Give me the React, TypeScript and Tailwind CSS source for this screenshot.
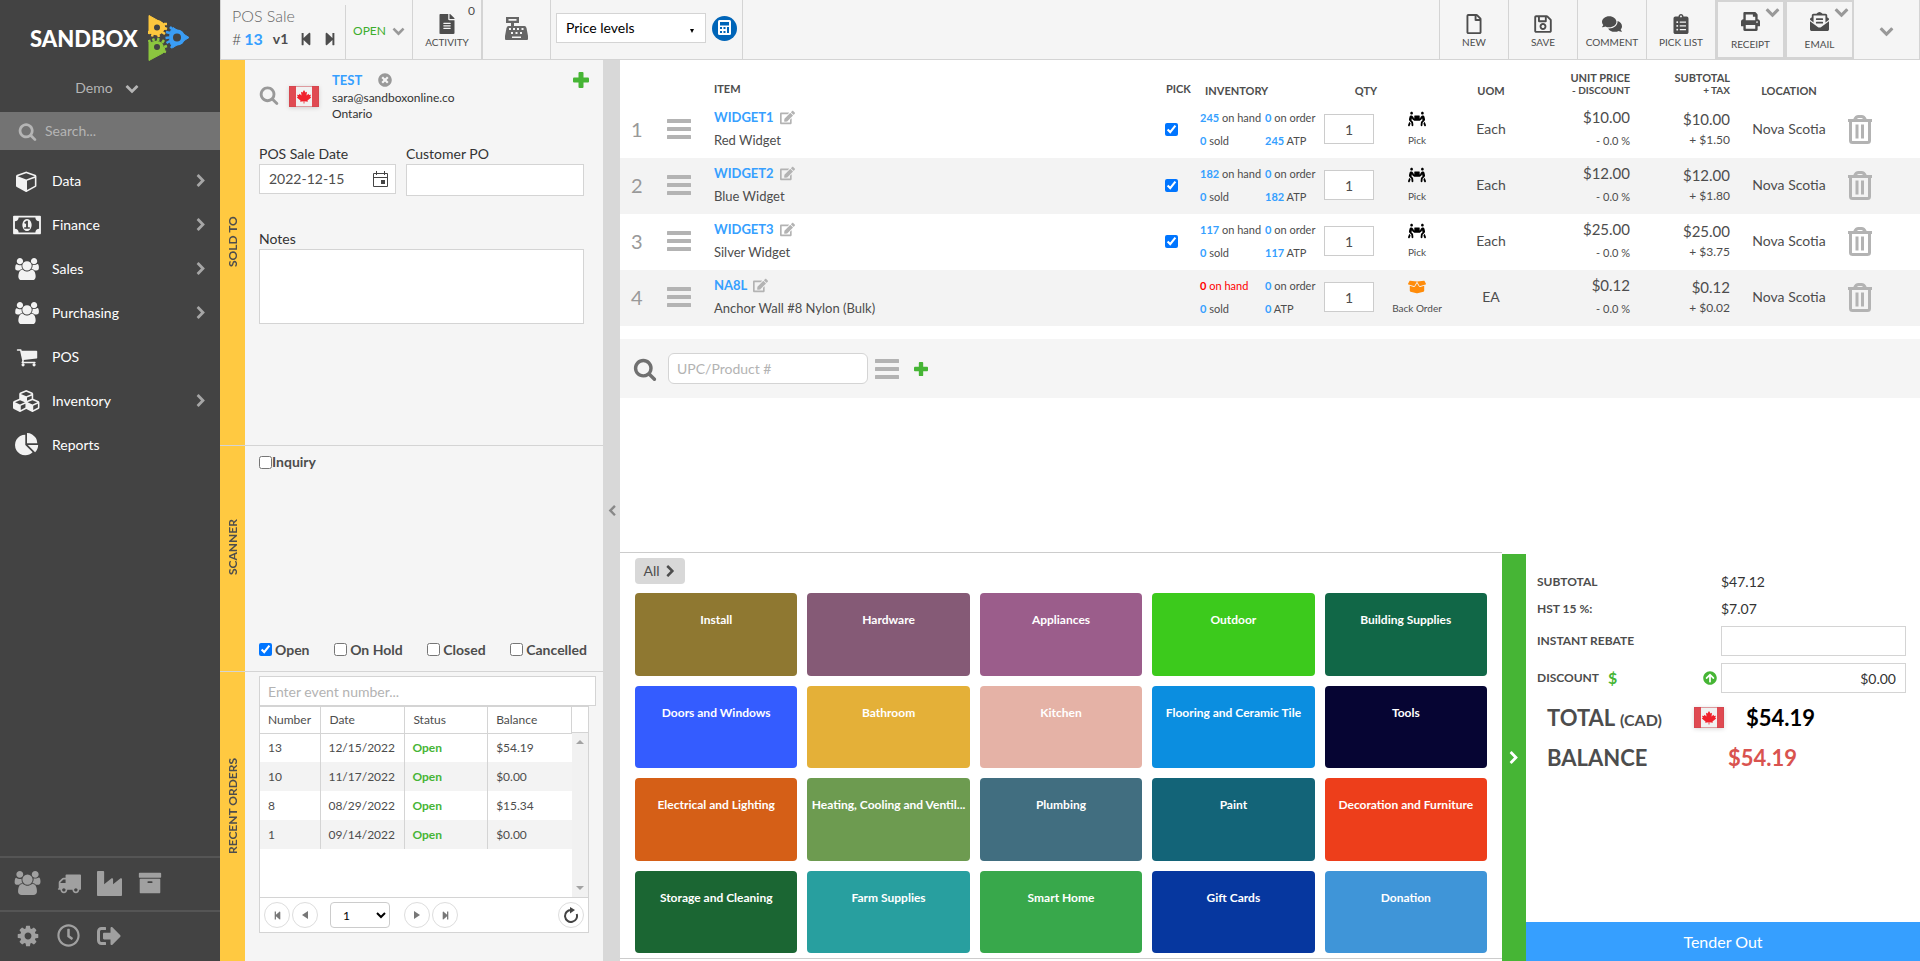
import type { ReactNode } from "react";
import {
  FaArrowCircleUp,
  FaBoxOpen,
  FaClipboardList,
  FaComments,
  FaEdit,
  FaEnvelopeOpenText,
  FaFileAlt,
  FaPeopleCarry,
  FaPrint,
  FaRegClock,
  FaRegFile,
  FaRegSave,
  FaSignOutAlt,
  FaStepBackward,
  FaStepForward,
  FaTimesCircle,
} from "react-icons/fa";

const glyphs = {
  down: {
    w: 1792,
    d: "M1683 808l-742 741q-19 19-45 19t-45-19l-742-741q-19-19-19-45.5t19-45.5l166-165q19-19 45-19t45 19l531 531 531-531q19-19 45-19t45 19l166 165q19 19 19 45.5t-19 45.5z",
  },
  right: {
    w: 1792,
    d: "M1363 877l-742 742q-19 19-45 19t-45-19l-166-166q-19-19-19-45t19-45l531-531-531-531q-19-19-19-45t19-45l166-166q19-19 45-19t45 19l742 742q19 19 19 45t-19 45z",
  },
  left: {
    w: 1792,
    d: "M1427 301l-531 531 531 531q19 19 19 45t-19 45l-166 166q-19 19-45 19t-45-19l-742-742q-19-19-19-45t19-45l742-742q19-19 45-19t45 19l166 166q19 19 19 45t-19 45z",
  },
  users: {
    w: 1920,
    d: "M593 896q-162 5-265 128h-134q-82 0-138-40.5t-56-118.5q0-353 124-353 6 0 43.5 21t97.5 42.5 119 21.5q67 0 133-23-5 37-5 66 0 159 93 287zm1071 637q0 120-73 189.5t-194 69.5h-874q-121 0-194-69.5t-73-189.5q0-53 3.5-103.5t14-109 26.5-108.5 43-97.5 62-81 85.5-53.5 111.5-20q10 0 43 21.5t73 48 107 48 135 21.5 135-21.5 107-48 73-48 43-21.5q61 0 111.5 20t85.5 53.5 62 81 43 97.5 26.5 108.5 14 109 3.5 103.5zm-1024-1277q0 106-75 181t-181 75-181-75-75-181 75-181 181-75 181 75 75 181zm704 384q0 159-112.5 271.5t-271.5 112.5-271.5-112.5-112.5-271.5 112.5-271.5 271.5-112.5 271.5 112.5 112.5 271.5zm576 225q0 78-56 118.5t-138 40.5h-134q-103-123-265-128 93-128 93-287 0-29-5-66 66 23 133 23 59 0 119-21.5t97.5-42.5 43.5-21q124 0 124 353zm-128-609q0 106-75 181t-181 75-181-75-75-181 75-181 181-75 181 75 75 181z",
  },
  search: {
    w: 1792,
    d: "M1216 832q0-185-131.5-316.5t-316.5-131.5-316.5 131.5-131.5 316.5 131.5 316.5 316.5 131.5 316.5-131.5 131.5-316.5zm512 832q0 52-38 90t-90 38q-54 0-90-38l-343-342q-179 124-399 124-143 0-273.5-55.5t-225-150-150-225-55.5-273.5 55.5-273.5 150-225 225-150 273.5-55.5 273.5 55.5 225 150 150 225 55.5 273.5q0 220-124 399l343 343q37 37 37 90z",
  },
  cube: {
    w: 1792,
    d: "M896 1629l640-349v-636l-640 233v752zm-64-865l698-254-698-254-698 254zm832-252v768q0 35-18 65t-49 47l-704 384q-28 16-61 16t-61-16l-704-384q-31-17-49-47t-18-65v-768q0-40 23-73t61-47l704-256q22-8 44-8t44 8l704 256q38 14 61 47t23 73z",
  },
  cubes: {
    w: 2304,
    d: "M640 1632l384-192v-314l-384 164v342zm-64-454l404-173-404-173-404 173zm1088 454l384-192v-314l-384 164v342zm-64-454l404-173-404-173-404 173zm-448-293l384-165v-266l-384 164v267zm-64-379l441-189-441-189-441 189zm1088 518v416q0 36-19 67t-52 47l-448 224q-25 14-57 14t-57-14l-448-224q-4-2-7-4-2 2-7 4l-448 224q-25 14-57 14t-57-14l-448-224q-33-16-52-47t-19-67v-416q0-38 21.5-70t56.5-48l434-186v-400q0-38 21.5-70t56.5-48l448-192q23-10 50-10t50 10l448 192q35 16 56.5 48t21.5 70v400l434 186q36 16 57 48t21 70z",
  },
  money: {
    w: 1920,
    d: "M768 1152h384v-96h-128v-448h-114l-148 137 77 80q42-37 55-57h2v288h-128v96zm512-256q0 70-21 142t-59.5 134-101.5 101-138 39-138-39-101.5-101-59.5-134-21-142 21-142 59.5-134 101.5-101 138-39 138 39 101.5 101 59.5 134 21 142zm512 256v-512q-106 0-181-75t-75-181h-1152q0 106-75 181t-181 75v512q106 0 181 75t75 181h1152q0-106 75-181t181-75zm128-832v1152q0 26-19 45t-45 19h-1792q-26 0-45-19t-19-45v-1152q0-26 19-45t45-19h1792q26 0 45 19t19 45z",
  },
  cart: {
    w: 1792,
    d: "M704 1536q0 52-38 90t-90 38-90-38-38-90 38-90 90-38 90 38 38 90zm896 0q0 52-38 90t-90 38-90-38-38-90 38-90 90-38 90 38 38 90zm128-1088v512q0 24-16.5 42.5t-40.5 21.5l-1044 122q13 60 13 70 0 16-24 64h920q26 0 45 19t19 45-19 45-45 19h-1024q-26 0-45-19t-19-45q0-11 8-31.5t16-36 21.5-40 15.5-29.5l-177-823h-204q-26 0-45-19t-19-45 19-45 45-19h256q16 0 28.5 6.5t19.5 15.5 13 24.5 8 26 5.5 29.5 4.5 26h1201q26 0 45 19t19 45z",
  },
  pie: {
    w: 1792,
    d: "M768 890l546 546q-106 108-247.5 168t-298.5 60q-209 0-385.5-103t-279.5-279.5-103-385.5 103-385.5 279.5-279.5 385.5-103v762zm187 6h773q0 157-60 298.5t-168 247.5zm709-128h-768v-768q209 0 385.5 103t279.5 279.5 103 385.5z",
  },
  truck: {
    w: 1792,
    d: "M640 1408q0-52-38-90t-90-38-90 38-38 90 38 90 90 38 90-38 38-90zm-384-512h384v-256h-158q-13 0-22 9l-195 195q-9 9-9 22v30zm1280 512q0-52-38-90t-90-38-90 38-38 90 38 90 90 38 90-38 38-90zm256-1088v1024q0 15-4 26.5t-13.5 18.5-16.5 11.5-23.5 6-22.5 2-25.5 0-22.5-.5q0 106-75 181t-181 75-181-75-75-181h-384q0 106-75 181t-181 75-181-75-75-181h-64q-3 0-22.5.5t-25.5 0-22.5-2-23.5-6-16.5-11.5-13.5-18.5-4-26.5q0-26 19-45t45-19v-320q0-8-.5-35t0-38 2.5-34.5 6.5-37 14-30.5 22.5-30l198-198q19-19 50.5-32t58.5-13h160v-192q0-26 19-45t45-19h1024q26 0 45 19t19 45z",
  },
  industry: {
    w: 1792,
    d: "M448 0q26 0 45 19t19 45v891l536-429q17-14 40-14 26 0 45 19t19 45v379l536-429q17-14 40-14 26 0 45 19t19 45v1152q0 26-19 45t-45 19h-1664q-26 0-45-19t-19-45v-1664q0-26 19-45t45-19h384z",
  },
  archive: {
    w: 1792,
    d: "M1088 832q0-26-19-45t-45-19h-256q-26 0-45 19t-19 45 19 45 45 19h256q26 0 45-19t19-45zm576-192v960q0 26-19 45t-45 19h-1408q-26 0-45-19t-19-45v-960q0-26 19-45t45-19h1408q26 0 45 19t19 45zm64-448v256q0 26-19 45t-45 19h-1536q-26 0-45-19t-19-45v-256q0-26 19-45t45-19h1536q26 0 45 19t19 45z",
  },
  cog: {
    w: 1792,
    d: "M1152 896q0-106-75-181t-181-75-181 75-75 181 75 181 181 75 181-75 75-181zm512-109v222q0 12-8 23t-20 13l-185 28q-19 54-39 91 35 50 107 138 10 12 10 25t-9 23q-27 37-99 108t-94 71q-12 0-26-9l-138-108q-44 23-91 38-16 136-29 186-7 28-36 28h-222q-14 0-24.5-8.5t-11.5-21.5l-28-184q-49-16-90-37l-141 107q-10 9-25 9-14 0-25-11-126-114-165-168-7-10-7-23 0-12 8-23 15-21 51-66.5t54-70.5q-27-50-41-99l-183-27q-13-2-21-12.5t-8-23.5v-222q0-12 8-23t19-13l186-28q14-46 39-92-40-57-107-138-10-12-10-24 0-10 9-23 26-36 98.5-107.5t94.5-71.5q13 0 26 10l138 107q44-23 91-38 16-136 29-186 7-28 36-28h222q14 0 24.5 8.5t11.5 21.5l28 184q49 16 90 37l142-107q9-9 24-9 13 0 25 10 129 119 165 170 7 8 7 22 0 12-8 23-15 21-51 66.5t-54 70.5q26 50 41 98l183 28q13 2 21 12.5t8 23.5z",
  },
};

type GlyphName = keyof typeof glyphs;

const Glyph = ({ name, className }: { name: GlyphName; className?: string }) => (
  <svg viewBox={`0 0 ${glyphs[name].w} 1792`} fill="currentColor" className={className} aria-hidden="true">
    <path d={glyphs[name].d} />
  </svg>
);

const Logo = () => (
  <svg viewBox="0 0 42 48" className="h-12 w-[42px]" aria-hidden="true">
    <g fill="#fdc73e" stroke="#fdc73e">
      <path d="M1 1.5L16 10 17 15 9 21 1 19Z" strokeLinejoin="round" />
      <circle cx="9" cy="13.500" r="7.500" stroke="none" />
      <path d="M16 10l3 0M16 14l3 1M14 18l3 2M10 20l1 3M5 19l-1 3.500M1 17l-.5 3" strokeWidth="2.500" />
    </g>
    <g fill="#3a9df5" stroke="#3a9df5">
      <path d="M25 13.500L41 23.500 25 33.500 22 29 22 18Z" strokeLinejoin="round" />
      <circle cx="29" cy="23.500" r="8" stroke="none" />
      <path d="M24 15l-2-2M22 19l-4-1M21 23.500l-3.500.5M22 27l-3.500 2M25 31l-2 3" strokeWidth="2.500" />
    </g>
    <g fill="#8cc63f" stroke="#8cc63f">
      <path d="M1 46.500L15 39 17 35 9 27 1 29Z" strokeLinejoin="round" />
      <circle cx="9" cy="34" r="7" stroke="none" />
      <path d="M2 29l-1-3M6 27l-1-2.500M10 27l.5-3M14 29l2-3M16 33l3-1M15 37l3 1" strokeWidth="2.500" />
    </g>
    <circle cx="9" cy="13.500" r="3" fill="#434343" />
    <circle cx="29" cy="23.500" r="4" fill="#434343" />
    <circle cx="9" cy="33" r="3" fill="#434343" />
  </svg>
);

const Flag = () => (
  <svg viewBox="0 0 30 21" className="h-[21px] w-[30px] shrink-0 drop-shadow-sm" role="img" aria-label="Canada">
    <rect width="30" height="21" fill="#f1f1f1" />
    <rect width="7" height="21" fill="#e04a52" />
    <rect x="23" width="7" height="21" fill="#e04a52" />
    <path d="M15 4l1.500 2.500 1.500-.7-.5 3.700 2-1.700.5 1.200 2-.2-.8 2 1 .7-3.700 3 .3 1.200-3.400-.4v2.200h-.8v-2.200l-3.400.4.3-1.200-3.700-3 1-.7-.8-2 2 .2.5-1.200 2 1.700-.5-3.700 1.500.7z" fill="#f0202b" />
    <rect x=".5" y=".5" width="29" height="20" fill="none" stroke="#c9444c" strokeOpacity=".5" />
  </svg>
);

const Bars = () => (
  <svg viewBox="0 0 24 20" className="h-5 w-6 text-[#b3b3b3]" fill="currentColor" aria-hidden="true">
    <rect width="24" height="4" rx=".5" />
    <rect y="8" width="24" height="4" rx=".5" />
    <rect y="16" width="24" height="4" rx=".5" />
  </svg>
);

const Plus = ({ className }: { className: string }) => (
  <svg viewBox="0 0 16 16" className={className} fill="#46b535" aria-hidden="true">
    <rect x="5.500" width="5" height="16" rx="1" />
    <rect y="5.500" width="16" height="5" rx="1" />
  </svg>
);

const Trash = () => (
  <svg viewBox="0 0 24 29" className="h-[29px] w-6 text-[#b3b3b3]" fill="none" stroke="currentColor" aria-hidden="true">
    <path d="M0 5.500h24" strokeWidth="3" />
    <path d="M6.500 5c1-2.500 2-3.500 4-3.500h3c2 0 3 1 4 3.500" strokeWidth="3" />
    <path d="M2.500 6v19.500q0 2 2 2h15q2 0 2-2V6" strokeWidth="3" />
    <path d="M9 9.500v14M14.500 9.500v14" strokeWidth="3" />
  </svg>
);

const Register = () => (
  <svg viewBox="0 0 23 23" className="h-[23px] w-[23px] text-[#666]" fill="currentColor" aria-hidden="true">
    <path fillRule="evenodd" d="M1 0h13v6H9v3h10.500q1.500 0 2 2L23 19v3q0 1-1 1H1q-1 0-1-1v-3l1.500-8q.5-2 2-2H6V6H1zM3.500 2v1.800h8V2zM4 11v2h2v-2zM8 11v2h2v-2zM12 11v2h2v-2zM16.500 11v2h2v-2zM6 15v2h2v-2zM10.500 15v2h2v-2zM15 15v2h2v-2zM7 19.500v1.500h9v-1.500z" />
  </svg>
);

const CalculatorBadge = () => (
  <svg viewBox="0 0 25 25" className="h-[25px] w-[25px]" aria-hidden="true">
    <circle cx="12.500" cy="12.500" r="12.500" fill="#0065b8" />
    <rect x="6" y="4" width="13" height="15" rx="1.500" fill="#fff" />
    <path fill="#0065b8" d="M8 6h9v3.500H8zM8 11h2v2H8zM11.500 11h2v2h-2zM15 11h2v6h-2zM8 15h2v2H8zM11.500 15h2v2h-2z" />
  </svg>
);

const menu: { label: string; icon: GlyphName; size: string; arrow: boolean }[] = [
  { label: "Data", icon: "cube", size: "w-[22px] h-[22px]", arrow: true },
  { label: "Finance", icon: "money", size: "w-7 h-[26px]", arrow: true },
  { label: "Sales", icon: "users", size: "w-6 h-[22px]", arrow: true },
  { label: "Purchasing", icon: "users", size: "w-6 h-[22px]", arrow: true },
  { label: "POS", icon: "cart", size: "w-[22px] h-[22px]", arrow: false },
  { label: "Inventory", icon: "cubes", size: "w-7 h-[22px]", arrow: true },
  { label: "Reports", icon: "pie", size: "w-6 h-6", arrow: false },
];

const Sidebar = () => (
  <aside className="flex w-[220px] shrink-0 flex-col bg-[#434343] text-white">
    <div className="flex h-[72px] items-center gap-2.5 pt-1 pl-[30px]">
      <span className="text-[22px] font-black">SANDBOX</span>
      <Logo />
    </div>
    <button className="flex h-10 items-center justify-center gap-3 pr-1.5 pb-2 text-sm text-[#b5b5b5]">
      Demo
      <Glyph name="down" className="h-3.5 w-3.5" />
    </button>
    <label className="flex h-[38px] items-center gap-2 bg-[#737373] pl-[18px]">
      <Glyph name="search" className="h-[19px] w-[19px] text-[#b5b5b5]" />
      <input
        type="text"
        aria-label="Search"
        placeholder="Search..."
        className="w-40 text-sm outline-none placeholder:text-[#b5b5b5]"
      />
    </label>
    <nav className="flex flex-col pt-[9px]">
      {menu.map((m) => (
        <a key={m.label} href="#" className="flex h-11 items-center pr-3 pl-[13px] text-sm">
          <span className="flex w-7 justify-center text-[#f2f2f2]">
            <Glyph name={m.icon} className={m.size} />
          </span>
          <span className="grow pl-[11px]">{m.label}</span>
          {m.arrow && <Glyph name="right" className="h-3.5 w-3.5 text-[#a6a6a6]" />}
        </a>
      ))}
    </nav>
    <div className="mt-auto flex h-[54px] items-center gap-4 border-t-2 border-[#555] pb-0.5 pl-3.5 text-[#a0a0a0]">
      <button aria-label="Customers"><Glyph name="users" className="h-6 w-[27px]" /></button>
      <button aria-label="Shipping"><Glyph name="truck" className="h-6 w-6" /></button>
      <button aria-label="Vendors"><Glyph name="industry" className="h-[25px] w-[25px]" /></button>
      <button aria-label="Archive"><Glyph name="archive" className="h-6 w-6" /></button>
    </div>
    <div className="flex h-[51px] items-center gap-[17px] border-t-2 border-[#555] pb-0.5 pl-4 text-[#a0a0a0]">
      <button aria-label="Settings"><Glyph name="cog" className="h-6 w-6" /></button>
      <button aria-label="History"><FaRegClock size={23} /></button>
      <button aria-label="Sign out"><FaSignOutAlt size={24} /></button>
    </div>
  </aside>
);

const actions = [
  { label: "NEW", Icon: FaRegFile },
  { label: "SAVE", Icon: FaRegSave },
  { label: "COMMENT", Icon: FaComments },
  { label: "PICK LIST", Icon: FaClipboardList },
];

const menuActions = [
  { label: "RECEIPT", Icon: FaPrint },
  { label: "EMAIL", Icon: FaEnvelopeOpenText },
];

const TopBar = () => (
  <header className="flex h-[60px] border-b border-l border-[#d4d4d4] bg-[#f5f5f5] text-[#4d4d4d]">
    <div className="mt-[5px] w-[125px] border-r border-[#d4d4d4] pl-[11px]">
      <h1 className="text-base leading-[22px] font-light text-[#666]">POS Sale</h1>
      <div className="flex h-6 items-center text-base">
        <span className="font-light">#</span>
        <span className="pl-[3px] font-bold text-[#369fff]">13</span>
        <span className="pl-2.5 text-sm font-bold">v1</span>
        <button aria-label="First sale" className="pl-[11px]"><FaStepBackward size={14} /></button>
        <button aria-label="Last sale" className="pl-2.5"><FaStepForward size={14} /></button>
      </div>
    </div>
    <button className="flex w-[67px] items-center justify-center gap-1.5 border-r border-[#d4d4d4] pt-0.5 text-xs text-[#3cad2c]">
      OPEN <Glyph name="down" className="h-[13px] w-[13px] text-[#999]" />
    </button>
    <button className="relative flex w-[70px] flex-col items-center border-r-2 border-[#d4d4d4] pt-3.5 text-[10px]">
      <FaFileAlt size={20} />
      <span className="leading-4">ACTIVITY</span>
      <span className="absolute top-1 right-1.5 text-xs leading-[14px]">0</span>
    </button>
    <button aria-label="Register" className="flex w-[68px] items-center justify-center border-r border-[#d4d4d4] pb-0.5">
      <Register />
    </button>
    <div className="flex w-48 items-start gap-1.5 border-r border-[#d4d4d4] pt-[13px] pl-[5px]">
      <div className="relative">
        <select
          aria-label="Price levels"
          className="h-[30px] w-[150px] appearance-none border border-[#d4d4d4] bg-white pl-[9px] text-sm text-black"
        >
          <option>Price levels</option>
        </select>
        <span className="pointer-events-none absolute top-4 right-3 border-x-2 border-t-4 border-x-transparent border-t-black" />
      </div>
      <button aria-label="Calculator" className="pt-[3px]"><CalculatorBadge /></button>
    </div>
    <div className="ml-auto flex border-l border-[#d4d4d4] text-[10px]">
      {actions.map(({ label, Icon }) => (
        <button key={label} className="flex w-[69px] flex-col items-center border-r border-[#d4d4d4] pt-3.5">
          <Icon size={20} />
          <span className="leading-4">{label}</span>
        </button>
      ))}
      {menuActions.map(({ label, Icon }) => (
        <button key={label} className="relative flex w-[69px] flex-col items-center border-2 border-[#d4d4d4] pt-2.5">
          <Icon size={19} />
          <span className="pt-[5px] leading-4">{label}</span>
          <Glyph name="down" className="absolute top-0.5 right-[3px] h-[15px] w-[15px] text-[#999]" />
        </button>
      ))}
      <button aria-label="More" className="flex w-[66px] items-center justify-center border-r border-[#d4d4d4] pt-0.5">
        <Glyph name="down" className="h-[15px] w-[15px] text-[#999]" />
      </button>
    </div>
  </header>
);

const Section = ({ title, size, children }: { title: string; size: string; children: ReactNode }) => (
  <section className={`flex ${size}`}>
    <h2 className="flex w-[25px] rotate-180 items-center justify-center bg-[#ffc941] pt-[22px] text-xs leading-none font-bold text-[#4d4d4d] [writing-mode:vertical-rl]">
      {title}
    </h2>
    <div className="min-w-0 grow">{children}</div>
  </section>
);

const statuses = [
  { label: "Open", checked: true },
  { label: "On Hold", checked: false },
  { label: "Closed", checked: false },
  { label: "Cancelled", checked: false },
];

const orders = [
  ["13", "12/15/2022", "$54.19"],
  ["10", "11/17/2022", "$0.00"],
  ["8", "08/29/2022", "$15.34"],
  ["1", "09/14/2022", "$0.00"],
];

const pagerButton = "flex h-[26px] w-[26px] items-center justify-center rounded-full border border-[#ddd] text-[#777]";

const SoldTo = () => (
  <div className="px-3.5">
    <div className="flex h-[84px] pt-3">
      <button aria-label="Find customer" className="h-9 pt-2.5">
        <Glyph name="search" className="h-5 w-5 text-[#999]" />
      </button>
      <div className="pt-3.5 pl-2.5"><Flag /></div>
      <div className="pl-[13px] text-xs leading-4 text-[#333]">
        <div className="flex items-center gap-4 pb-0.5">
          <a href="#" className="text-[13px] leading-4 font-bold text-[#369fff]">TEST</a>
          <button aria-label="Clear customer"><FaTimesCircle size={14} className="text-[#999]" /></button>
        </div>
        <p>sara@sandboxonline.co</p>
        <p>Ontario</p>
      </div>
      <button aria-label="Add customer" className="ml-auto h-4"><Plus className="h-4 w-4" /></button>
    </div>
    <div className="flex gap-2.5 text-sm text-[#333]">
      <div>
        <label htmlFor="sale-date" className="block h-5 leading-5">POS Sale Date</label>
        <div className="flex h-[30px] w-[137px] items-center border border-[#d4d4d4] bg-white pr-[7px] pl-[9px]">
          <input id="sale-date" defaultValue="2022-12-15" className="w-full text-[#4d4d4d] outline-none" />
          <button aria-label="Open calendar">
            <svg viewBox="0 0 15 16" className="h-4 w-[15px]" fill="none" stroke="#444" aria-hidden="true">
              <path d="M.5 2.500h14v13H.5zM.5 6.500h14M3.500 0v4M11.500 0v4" />
              <rect x="8.500" y="9.500" width="3" height="3" fill="#444" />
            </svg>
          </button>
        </div>
      </div>
      <div className="grow">
        <label htmlFor="customer-po" className="block h-5 leading-5">Customer PO</label>
        <input id="customer-po" className="h-8 w-full max-w-[178px] border border-[#d4d4d4] bg-white px-2" />
      </div>
    </div>
    <label htmlFor="notes" className="block pt-[33px] text-sm leading-5 text-[#333]">Notes</label>
    <textarea id="notes" className="block h-[75px] w-[325px] resize-none border border-[#d4d4d4] bg-white" />
  </div>
);

const Scanner = () => (
  <div className="flex h-full flex-col justify-between pt-1.5 pb-[11px] pl-3.5 text-sm font-bold text-[#4d4d4d]">
    <label className="flex items-center">
      <input type="checkbox" className="h-[13px] w-[13px]" />
      Inquiry
    </label>
    <div className="flex justify-between pr-4">
      {statuses.map((s) => (
        <label key={s.label} className="flex items-center gap-[3px]">
          <input type="checkbox" defaultChecked={s.checked} className="mb-0.5 h-[13px] w-[13px]" />
          {s.label}
        </label>
      ))}
    </div>
  </div>
);

const RecentOrders = () => (
  <div className="pt-1 pr-[7px] pl-3.5 text-xs text-[#4d4d4d]">
    <input
      aria-label="Event number"
      placeholder="Enter event number..."
      className="block h-[30px] w-full border border-[#d4d4d4] bg-white px-2 text-sm placeholder:text-[#b3b3b3]"
    />
    <div className="w-[330px] border border-[#d4d4d4] bg-white">
      <div className="flex h-[190px]">
        <table className="h-[142px] grow table-fixed border-collapse text-left">
          <thead>
            <tr className="h-[26px] border-b border-[#d4d4d4]">
              <th className="w-[61px] border-r border-[#d4d4d4] pl-2 font-normal">Number</th>
              <th className="w-[84px] border-r border-[#d4d4d4] pl-2 font-normal">Date</th>
              <th className="w-[83px] border-r border-[#d4d4d4] pl-2 font-normal">Status</th>
              <th className="w-[84px] border-r border-[#d4d4d4] pl-2 font-normal">Balance</th>
            </tr>
          </thead>
          <tbody>
            {orders.map(([number, date, balance]) => (
              <tr key={number} className="h-[29px] even:bg-[#f3f3f3]">
                <td className="border-r border-[#d4d4d4] pl-2">{number}</td>
                <td className="border-r border-[#d4d4d4] pl-[7px]">{date}</td>
                <td className="border-r border-[#d4d4d4] pl-[7px] font-bold text-[#46b535]">Open</td>
                <td className="pl-2">{balance}</td>
              </tr>
            ))}
          </tbody>
        </table>
        <div className="flex w-4 shrink-0 flex-col">
          <div className="h-[26px] border-b border-[#d4d4d4]" />
          <div className="flex grow flex-col items-center justify-between bg-[#f1f1f1] py-[7px]">
            <span className="border-x-4 border-b-4 border-x-transparent border-b-[#a3a3a3]" />
            <span className="border-x-4 border-t-4 border-x-transparent border-t-[#a3a3a3]" />
          </div>
        </div>
      </div>
      <div className="flex h-[35px] items-center gap-0.5 border-t border-[#d4d4d4] px-1">
        <button aria-label="First page" className={pagerButton}><FaStepBackward size={9} /></button>
        <button aria-label="Previous page" className={pagerButton}>
          <span className="border-y-4 border-r-[6px] border-y-transparent border-r-[#777]" />
        </button>
        <select aria-label="Page" className="mr-3 ml-2.5 h-[26px] w-[60px] rounded border border-[#ccc] bg-white pl-2 text-xs text-black">
          <option>1</option>
        </select>
        <button aria-label="Next page" className={pagerButton}>
          <span className="border-y-4 border-l-[6px] border-y-transparent border-l-[#777]" />
        </button>
        <button aria-label="Last page" className={pagerButton}><FaStepForward size={9} /></button>
        <button aria-label="Refresh" className={`${pagerButton} ml-auto`}>
          <svg viewBox="0 0 16 16" className="h-4 w-4" fill="none" stroke="#444" strokeWidth="2" aria-hidden="true">
            <path d="M8 3a6 6 0 1 0 5.700 4" />
            <path d="M7 0l5 3-5 3.500z" fill="#444" stroke="none" />
          </svg>
        </button>
      </div>
    </div>
  </div>
);

const lines = [
  { code: "WIDGET1", name: "Red Widget", hand: "245", atp: "245", uom: "Each", price: "$10.00", tax: "$1.50", pick: true },
  { code: "WIDGET2", name: "Blue Widget", hand: "182", atp: "182", uom: "Each", price: "$12.00", tax: "$1.80", pick: true },
  { code: "WIDGET3", name: "Silver Widget", hand: "117", atp: "117", uom: "Each", price: "$25.00", tax: "$3.75", pick: true },
  { code: "NA8L", name: "Anchor Wall #8 Nylon (Bulk)", hand: "0", atp: "0", uom: "EA", price: "$0.12", tax: "$0.02", pick: false },
];

const Count = ({ value, label }: { value: string; label: string }) => (
  <span>
    <b className="text-[#369fff]">{value}</b> {label}
  </span>
);

const Lines = () => (
  <table className="w-full table-fixed text-sm text-[#4d4d4d]">
    <thead>
      <tr className="h-[42px] align-bottom text-[11px] leading-3">
        <th className="w-[38px]" />
        <th className="w-[45px]" />
        <th className="pb-[7px] pl-[11px] text-left">ITEM</th>
        <th className="w-[35px] pb-[7px] pl-1.5 text-left">PICK</th>
        <th className="w-[125px] pb-[5px] pl-2.5 text-left">INVENTORY</th>
        <th className="w-[58px] pb-[5px] pl-[34px] text-center">QTY</th>
        <th className="w-[78px]" />
        <th className="w-[70px] pb-[5px]">UOM</th>
        <th className="w-[104px] pb-1.5 text-right">
          UNIT PRICE
          <span className="block text-[10px]">- DISCOUNT</span>
        </th>
        <th className="w-[100px] pb-1.5 text-right">
          SUBTOTAL
          <span className="block text-[10px]">+ TAX</span>
        </th>
        <th className="w-[118px] pb-[5px]">LOCATION</th>
        <th className="w-[72px]" />
      </tr>
    </thead>
    <tbody>
      {lines.map((l, i) => (
        <tr key={l.code} className="h-14 even:bg-[#f3f3f3] [&>td]:pb-0.5">
          <td className="pl-[11px] text-xl text-[#999]">{i + 1}</td>
          <td className="pl-[9px]">
            <button aria-label="Options" className="block"><Bars /></button>
          </td>
          <td className="pl-[11px] text-[13px]">
            <div className="flex items-center gap-1.5 leading-[23px]">
              <a href="#" className="font-bold text-[#369fff]">{l.code}</a>
              <button aria-label={`Edit ${l.code}`}><FaEdit size={15} className="text-[#b3b3b3]" /></button>
            </div>
            <div className="leading-[23px]">{l.name}</div>
          </td>
          <td className="pl-[5px]">
            {l.pick && <input type="checkbox" aria-label={`Pick ${l.code}`} defaultChecked className="block h-[13px] w-[13px]" />}
          </td>
          <td className="pl-[5px] text-[11px] whitespace-nowrap">
            <div className="grid grid-cols-[65px_1fr] leading-[23px]">
              {l.pick ? (
                <Count value={l.hand} label="on hand" />
              ) : (
                <span className="text-[#f00]"><b>{l.hand}</b> on hand</span>
              )}
              <Count value="0" label="on order" />
              <Count value="0" label="sold" />
              <Count value={l.atp} label="ATP" />
            </div>
          </td>
          <td className="pl-1">
            <input
              aria-label={`Quantity of ${l.code}`}
              defaultValue="1"
              className="block h-[30px] w-[50px] border border-[#ccc] bg-white text-center"
            />
          </td>
          <td className="text-[10px] whitespace-nowrap">
            <div className="flex flex-col items-center gap-1">
              {l.pick ? <FaPeopleCarry size={18} className="text-black" /> : <FaBoxOpen size={18} className="text-[#ff8c0a]" />}
              <span className="leading-4">{l.pick ? "Pick" : "Back Order"}</span>
            </div>
          </td>
          <td className="text-center">{l.uom}</td>
          <td className="text-right text-[15px] leading-[23px]">
            {l.price}
            <div className="text-[11px] leading-[23px]">- 0.0 %</div>
          </td>
          <td className="text-right text-[15px] leading-[22px]">
            {l.price}
            <div className="text-xs leading-5">+ {l.tax}</div>
          </td>
          <td className="text-center">Nova Scotia</td>
          <td>
            <button aria-label={`Remove ${l.code}`} className="block"><Trash /></button>
          </td>
        </tr>
      ))}
    </tbody>
  </table>
);

const categories = [
  ["Install", "bg-[#8f7831]"],
  ["Hardware", "bg-[#855a76]"],
  ["Appliances", "bg-[#9b5d8b]"],
  ["Outdoor", "bg-[#3cca1c]"],
  ["Building Supplies", "bg-[#116747]"],
  ["Doors and Windows", "bg-[#345cff]"],
  ["Bathroom", "bg-[#e4b038]"],
  ["Kitchen", "bg-[#e5b2a6]"],
  ["Flooring and Ceramic Tile", "bg-[#0b8ee0]"],
  ["Tools", "bg-[#060533]"],
  ["Electrical and Lighting", "bg-[#d55f17]"],
  ["Heating, Cooling and Ventil...", "bg-[#6d9b50]"],
  ["Plumbing", "bg-[#416e80]"],
  ["Paint", "bg-[#136478]"],
  ["Decoration and Furniture", "bg-[#ed3e1b]"],
  ["Storage and Cleaning", "bg-[#1b6633]"],
  ["Farm Supplies", "bg-[#289f9f]"],
  ["Smart Home", "bg-[#38a84b]"],
  ["Gift Cards", "bg-[#06379f]"],
  ["Donation", "bg-[#3f95d8]"],
];

const Categories = () => (
  <div className="mb-0.5 flex min-w-0 grow flex-col border-y border-[#ccc] px-[15px] pt-[5px] pb-[5px]">
    <button className="flex h-[26px] w-[50px] items-center justify-center gap-1 rounded bg-[#d8d8d8] text-sm text-[#4d4d4d]">
      All <Glyph name="right" className="h-[13px] w-[13px]" />
    </button>
    <div className="grid grow grid-cols-5 grid-rows-4 gap-2.5 pt-[9px]">
      {categories.map(([name, color]) => (
        <button key={name} className={`flex min-w-0 items-start justify-center rounded pt-[18px] text-xs font-bold text-white ${color}`}>
          <span className="leading-[18px] whitespace-nowrap">{name}</span>
        </button>
      ))}
    </div>
  </div>
);

const Totals = () => (
  <div className="flex w-[394px] shrink-0 flex-col text-[#4d4d4d]">
    <div className="grid grid-cols-[184px_1fr] items-center gap-y-[7px] pt-5 pr-3.5 pl-[11px] text-xs font-bold">
      <span className="leading-5">SUBTOTAL</span>
      <span className="text-sm font-normal text-[#333]">$47.12</span>
      <span className="leading-5">HST 15 %:</span>
      <span className="text-sm font-normal text-[#333]">$7.07</span>
      <label htmlFor="rebate">INSTANT REBATE</label>
      <input id="rebate" className="h-[30px] w-full border border-[#d4d4d4] px-2 text-right text-sm font-normal" />
      <div className="flex items-center pr-1">
        <label htmlFor="discount">DISCOUNT</label>
        <span className="pl-[9px] text-base leading-5 text-[#46b535]">$</span>
        <FaArrowCircleUp size={14} className="ml-auto text-[#46b535]" />
      </div>
      <input
        id="discount"
        defaultValue="$0.00"
        className="h-[30px] w-full border border-[#d4d4d4] px-[9px] text-right text-sm font-normal text-[#333]"
      />
    </div>
    <div className="flex h-[41px] items-center pt-2 pl-[21px] text-[22px] leading-none font-bold">
      <span className="w-[147px]">
        TOTAL <span className="text-base leading-none">(CAD)</span>
      </span>
      <Flag />
      <span className="pl-[22px] text-black">$54.19</span>
    </div>
    <div className="flex h-[41px] items-center pt-1.5 pl-[21px] text-[22px] leading-none font-bold">
      <span className="w-[181px]">BALANCE</span>
      <span className="text-[#d9534f]">$54.19</span>
    </div>
    <button className="mt-auto h-[39px] bg-[#369fff] text-base text-white">Tender Out</button>
  </div>
);

export default function App() {
  return (
    <div className="flex min-h-screen bg-white font-[Lato,'Liberation_Sans',sans-serif]">
      <Sidebar />
      <div className="flex min-w-0 grow flex-col">
        <TopBar />
        <div className="flex grow">
          <div className="flex w-[383px] shrink-0 flex-col divide-y divide-[#d4d4d4] bg-[#f5f5f5]">
            <Section title="SOLD TO" size="h-[386px]"><SoldTo /></Section>
            <Section title="SCANNER" size="h-[226px]"><Scanner /></Section>
            <Section title="RECENT ORDERS" size="grow"><RecentOrders /></Section>
          </div>
          <button aria-label="Collapse panel" className="flex w-[17px] shrink-0 items-center justify-center bg-[#d8d8d8] text-[#888]">
            <Glyph name="left" className="h-3 w-3" />
          </button>
          <main className="flex min-w-0 grow flex-col">
            <Lines />
            <div className="mt-[13px] flex h-[59px] items-center bg-[#f5f5f5] pl-[13px]">
              <Glyph name="search" className="h-6 w-6 text-[#707070]" />
              <input
                aria-label="UPC or product number"
                placeholder="UPC/Product #"
                className="ml-[11px] h-[31px] w-[200px] rounded-md border border-[#d4d4d4] bg-white px-2 text-sm placeholder:text-[#b3b3b3]"
              />
              <button aria-label="Product list" className="ml-[7px]"><Bars /></button>
              <button aria-label="Add product" className="ml-[15px]"><Plus className="h-3.5 w-3.5" /></button>
            </div>
            <div className="mt-auto flex h-[409px]">
              <Categories />
              <button aria-label="Hide totals" className="mt-0.5 flex w-6 shrink-0 items-center justify-center bg-[#46b535] text-white">
                <Glyph name="right" className="h-3.5 w-3.5" />
              </button>
              <Totals />
            </div>
          </main>
        </div>
      </div>
    </div>
  );
}
